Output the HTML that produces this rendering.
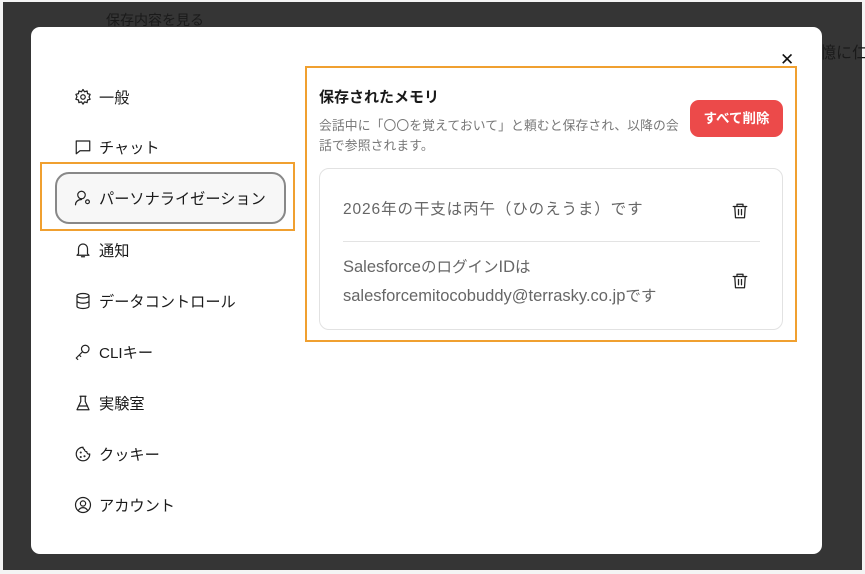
<!DOCTYPE html>
<html><head><meta charset="utf-8"><style>
*{margin:0;padding:0;box-sizing:border-box}
body{width:865px;height:574px;background:#f4f4f4;position:relative;overflow:hidden;font-family:"Liberation Sans","Noto Sans CJK JP",sans-serif;color:#1a1a1a}
.bg{position:absolute;left:3px;top:2px;width:859px;height:568px;background:#353535}
.t1{position:absolute;left:106px;top:10px;font-size:14px;color:#1a1a1a}
.t2{position:absolute;left:820px;top:39px;font-size:16px;color:#1a1a1a;white-space:nowrap}
.modal{position:absolute;left:31px;top:27px;width:791px;height:527px;background:#fff;border-radius:9px}
.close{position:absolute;left:780px;top:50px;font-size:17px;color:#111}
.nav{position:absolute;left:74px;font-size:15.2px;display:flex;align-items:center;gap:7px;color:#1a1a1a}
.nav svg{width:18px;height:18px;fill:none;stroke:#222;stroke-width:1.6;stroke-linecap:round;stroke-linejoin:round}
.hl1{position:absolute;left:40px;top:162px;width:255px;height:69px;border:2.5px solid #f0a030}
.pill{position:absolute;left:55px;top:172px;width:231px;height:52px;border:2px solid #888;border-radius:14px;background:#f7f7f7}
.hl2{position:absolute;left:305px;top:66px;width:492px;height:276px;border:2.5px solid #f0a030}
.h{position:absolute;left:319px;top:86px;font-size:15px;font-weight:bold;color:#1a1a1a}
.d{position:absolute;left:319px;top:116px;font-size:12.8px;line-height:20px;color:#777;width:372px;letter-spacing:0.1px}
.btn{position:absolute;left:690px;top:100px;width:93px;height:37px;background:#ec4a4a;border-radius:9px;color:#fff;font-size:13.5px;font-weight:bold;text-align:center;line-height:37px}
.card{position:absolute;left:319px;top:168px;width:464px;height:162px;border:1px solid #e2e2e2;border-radius:10px}
.m{position:absolute;left:343px;font-size:15.5px;color:#666;line-height:28px;white-space:nowrap}
.m .l{font-size:16.5px}
.sep{position:absolute;left:343px;top:241px;width:417px;height:1px;background:#e3e3e3}
.tr{position:absolute;left:731px;width:18px;height:20px;fill:none;stroke:#222;stroke-width:1.7;stroke-linecap:round;stroke-linejoin:round}
</style></head><body>
<div class="bg"></div>
<div class="t1">保存内容を見る</div>
<div class="t2">憶に仁</div>
<div class="modal"></div>
<div class="close">✕</div>

<div class="nav" style="top:86px"><svg viewBox="0 0 24 24"><circle cx="12" cy="12" r="3"/><path d="M12 2l2 3 3.5-1 .5 3.5 3.5 1-1.5 3.5 1.5 3-3.5 1-.5 3.5-3.5-1-2 3-2-3-3.5 1-.5-3.5-3.5-1 1.5-3.5L2.5 8.5l3.5-1 .5-3.5 3.5 1z"/></svg>一般</div>
<div class="nav" style="top:136px"><svg viewBox="0 0 24 24"><path d="M3 4h18v13H8l-5 4z"/></svg>チャット</div>
<div class="hl1"></div><div class="pill"></div>
<div class="nav" style="top:187px"><svg viewBox="0 0 24 24"><circle cx="10" cy="8" r="5"/><path d="M2 21c0-4 3.5-7 8-7"/><circle cx="18" cy="17" r="2.5"/></svg>パーソナライゼーション</div>
<div class="nav" style="top:239px"><svg viewBox="0 0 24 24"><path d="M6 17V10a6 6 0 0 1 12 0v7l2 2H4z"/><path d="M10 21h4"/></svg>通知</div>
<div class="nav" style="top:290px"><svg viewBox="0 0 24 24"><ellipse cx="12" cy="5" rx="8" ry="3"/><path d="M4 5v14c0 1.7 3.6 3 8 3s8-1.3 8-3V5M4 12c0 1.7 3.6 3 8 3s8-1.3 8-3"/></svg>データコントロール</div>
<div class="nav" style="top:341px"><svg viewBox="0 0 24 24"><circle cx="15" cy="8" r="5"/><path d="M11 12l-8 8 2 2M7 16l2 2"/></svg>CLIキー</div>
<div class="nav" style="top:392px"><svg viewBox="0 0 24 24"><path d="M9 3v7l-5 11h16l-5-11V3M8 3h8M6 16h12"/></svg>実験室</div>
<div class="nav" style="top:443px"><svg viewBox="0 0 24 24"><path d="M12 3a9 9 0 1 0 9 9 3 3 0 0 1-4-3 3 3 0 0 1-3-3 3 3 0 0 1-2-3z"/><circle cx="9" cy="10" r=".6"/><circle cx="14" cy="15" r=".6"/><circle cx="9" cy="16" r=".6"/></svg>クッキー</div>
<div class="nav" style="top:494px"><svg viewBox="0 0 24 24"><circle cx="12" cy="12" r="10"/><circle cx="12" cy="10" r="3.5"/><path d="M6 19c1.5-2.5 3.5-3.5 6-3.5s4.5 1 6 3.5"/></svg>アカウント</div>

<div class="hl2"></div>
<div class="h">保存されたメモリ</div>
<div class="d">会話中に「〇〇を覚えておいて」と頼むと保存され、以降の会話で参照されます。</div>
<div class="btn">すべて削除</div>
<div class="card"></div>
<div class="m" style="top:196px;letter-spacing:0.9px">2026年の干支は丙午（ひのえうま）です</div>
<div class="sep"></div>
<div class="m" style="top:253px"><span class="l">Salesforce</span>のログイン<span class="l">ID</span>は<br><span class="l">salesforcemitocobuddy@terrasky.co.jp</span>です</div>
<svg class="tr" style="top:201px" viewBox="0 0 24 24"><path d="M3 6h18M8 6V3h8v3M5 6l1 15h12l1-15M10 10v7M14 10v7"/></svg>
<svg class="tr" style="top:271px" viewBox="0 0 24 24"><path d="M3 6h18M8 6V3h8v3M5 6l1 15h12l1-15M10 10v7M14 10v7"/></svg>
</body></html>
